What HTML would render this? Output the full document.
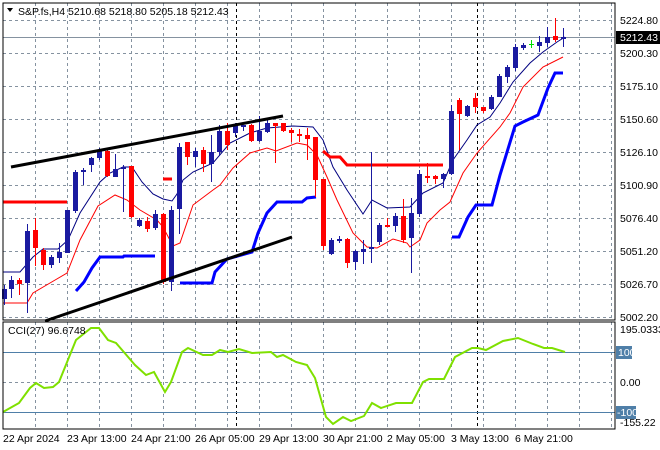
<!DOCTYPE html>
<html><head><meta charset="utf-8"><style>
html,body{margin:0;padding:0;background:#fff;width:660px;height:450px;overflow:hidden}
svg{display:block}
text{font-family:"Liberation Sans",sans-serif;font-size:10.5px;fill:#000}
</style></head><body>
<svg id="s" width="660" height="450" xmlns="http://www.w3.org/2000/svg">
<rect width="660" height="450" fill="#fff"/>
<g id="grid" stroke="#8592a0" stroke-width="1" stroke-dasharray="3,3" fill="none"></g>
<line x1="3" y1="37.5" x2="615" y2="37.5" stroke="#8592a0"/>
<line x1="236.5" y1="3" x2="236.5" y2="429" stroke="#000" stroke-dasharray="3,3"/>
<line x1="477.5" y1="3" x2="477.5" y2="429" stroke="#000" stroke-dasharray="3,3"/>
<line x1="3" y1="352.5" x2="615" y2="352.5" stroke="#4f7fa8"/>
<line x1="3" y1="412.5" x2="615" y2="412.5" stroke="#4f7fa8"/>
<g id="ind" fill="none"></g>
<g id="c"></g>
<polyline fill="none" stroke="#000" stroke-width="3" points="11,167 283,116"/>
<polyline fill="none" stroke="#000" stroke-width="3" points="45,321 292,237"/>
<rect x="3" y="3" width="612" height="317" fill="none" stroke="#000"/>
<rect x="3" y="322" width="612" height="107" fill="none" stroke="#000"/>
<path d="M7 8 L13 8 L10 12 Z" fill="#000"/>
<text x="18" y="15">S&amp;P.fs,H4  5210.68 5218.80 5205.18 5212.43</text>
<text x="8" y="334">CCI(27) 96.6748</text>
<g id="lab"></g>
<rect x="616" y="31" width="44" height="13" fill="#000"/>
<text x="620" y="41" style="fill:#fff">5212.43</text>
<rect x="616" y="346" width="16" height="13" fill="#4f7fa8"/>
<text x="618" y="356" style="fill:#fff">100</text>
<rect x="616" y="406" width="20" height="13" fill="#4f7fa8"/>
<text x="617" y="416" style="fill:#fff">-100</text>
<text x="620" y="333">195.0333</text>
<text x="620" y="386">0.00</text>
<text x="620" y="426">-155.22</text>
</svg>
<script>
var NS="http://www.w3.org/2000/svg";
function el(p,t,a){var e=document.createElementNS(NS,t);for(var k in a)e.setAttribute(k,a[k]);document.getElementById(p).appendChild(e);return e;}
var ys=[20,53,86,119,152,185,218,251,284,317],ls=["5224.80","5200.30","5175.10","5150.60","5126.10","5100.90","5076.40","5051.20","5026.70","5002.20"];
ys.forEach(function(y,i){el("grid","line",{x1:3,y1:y+.5,x2:615,y2:y+.5});var t=el("lab","text",{x:620,y:y+4});t.textContent=ls[i];});
el("grid","line",{x1:3,y1:382.5,x2:615,y2:382.5});
for(var x=35;x<615;x+=32){el("grid","line",{x1:x+.5,y1:3,x2:x+.5,y2:320});el("grid","line",{x1:x+.5,y1:322,x2:x+.5,y2:429});}
var tl=["22 Apr 2024","23 Apr 13:00","24 Apr 21:00","26 Apr 05:00","29 Apr 13:00","30 Apr 21:00","2 May 05:00","3 May 13:00","6 May 21:00"];
tl.forEach(function(s,i){var t=el("lab","text",{x:3+64*i,y:442});t.textContent=s;});
function pl(pts,c,w){el("ind","polyline",{points:pts,stroke:c,"stroke-width":w});}
pl("3,272 20,272 33,257 43,249 58,249 68,240 80,213 100,182 110,173 123,167 132,167 142,182 153,194 163,199 172,201 177,194 183,180 193,172 213,163 230,143 250,133 267,128 293,126 313,127 323,140 333,167 347,190 363,214 372,200 387,208 410,207 423,193 443,183 453,160 467,140 477,125 490,117 500,103 513,82 530,63 543,52 557,42 565,37","#000080",1);
pl("3,303 17,303 27,303 33,293 50,283 67,273 80,240 98,206 115,195 127,200 140,210 157,220 163,227 173,246 180,243 193,205 213,190 220,185 233,168 250,153 267,148 276,151 297,143 307,145 317,155 327,177 337,200 353,233 367,247 377,248 393,239 407,243 410,247 420,240 427,223 440,210 450,202 463,173 477,153 500,127 510,113 523,87 543,67 563,57","#ff0000",1);
pl("76,291 84,282 92,268 100,257 123,257 124,256 155,256","#0000ff",3);
pl("180,283 212,283 215,272 227,259 252,252 258,233 267,213 277,202 302,202 307,198 316,197","#0000ff",3);
pl("452,237 459,237 468,217 476,205 492,205 500,175 515,126 523,122 538,115 548,88 555,73 563,73","#0000ff",3);
pl("3,202 67,202","#ff0000",3);pl("163,179 172,179","#ff0000",3);
pl("323,151 330,157 340,157 347,165 443,165","#ff0000",3);
pl("3,412 19,403 30,388 36,383 44,388 53,387 59,382 76,340 91,328 99,328 108,340 116,343 135,365 146,375 154,372 165,392 171,382 182,352 188,348 203,355 212,355 220,350 228,352 239,349 252,353 271,352 277,357 283,355 296,362 307,365 315,378 326,417 333,424 343,417 351,421 364,416 372,403 381,408 396,403 412,403 423,382 429,379 444,379 455,357 472,348 478,348 486,350 503,341 518,338 533,344 544,348 552,348 565,352","#7fe000",2);
// x, color(b/r), bodyTop, bodyBot, hi, lo
var C=[[4,'b',289,299,285,305],[11,'b',280,289,276,298],[19,'r',280,284,278,295],[27,'b',231,283,224,313],[35,'r',230,248,218,266],[43,'r',250,265,248,270],[51,'b',257,265,255,268],[59,'b',252,258,243,263],[67,'b',210,253,210,253],[75,'b',172,211,170,213],[83,'b',170,172,168,185],[91,'b',158,165,157,172],[99,'b',151,158,148,160],[107,'r',151,176,150,177],[115,'b',169,177,154,177],[123,'b',167,169,165,212],[131,'r',166,217,166,218],[139,'b',220,226,218,227],[147,'r',221,229,217,232],[155,'b',214,228,210,230],[163,'r',214,282,213,284],[171,'b',210,282,206,291],[179,'b',147,209,143,234],[187,'r',142,157,142,165],[195,'b',151,157,148,167],[203,'r',150,164,147,172],[211,'b',152,164,135,182],[219,'b',131,152,125,155],[227,'r',131,145,123,150],[235,'b',125,133,123,137],[243,'b',125,126,125,131],[251,'r',125,141,124,142],[259,'b',131,141,116,142],[267,'b',123,132,118,133],[275,'r',123,126,123,163],[283,'r',123,131,123,132],[291,'r',130,133,128,142],[299,'r',134,136,129,142],[307,'r',135,139,128,160],[315,'r',137,180,137,197],[323,'r',179,246,179,250],[331,'b',240,254,238,255],[339,'b',239,241,236,243],[347,'r',239,263,238,268],[355,'b',251,262,250,270],[363,'b',249,252,240,264],[371,'b',247,248,152,263],[379,'b',225,242,223,245],[387,'r',225,226,218,227],[395,'b',216,226,213,232],[403,'r',216,240,199,243],[411,'b',213,238,198,273],[419,'b',174,214,170,217],[427,'r',176,177,163,183],[435,'r',176,179,175,184],[443,'b',174,179,173,188],[451,'b',111,174,105,175],[459,'r',100,114,98,150],[467,'b',106,116,105,117],[475,'r',98,107,93,113],[483,'r',107,111,107,113],[491,'b',97,109,95,110],[499,'b',76,97,74,97],[507,'b',67,77,65,83],[515,'b',47,68,44,71],[523,'b',45,48,43,50],[531,'g',44,44,40,48],[539,'b',42,46,36,52],[547,'b',37,43,27,47],[555,'r',36,40,18,42],[563,'b',37,39,28,47]];
C.forEach(function(c){var col=c[1]=='b'?'#1a1aa0':c[1]=='r'?'#ff0000':'#00e000';
el("c","line",{x1:c[0]+.5,y1:c[4],x2:c[0]+.5,y2:c[5],stroke:col});
if(c[1]=='g'){el("c","line",{x1:c[0]-2,y1:c[2]+.5,x2:c[0]+3,y2:c[2]+.5,stroke:col});}
else el("c","rect",{x:c[0]-2,y:c[2],width:5,height:Math.max(2,c[3]-c[2]),fill:col});});
</script>
</body></html>
